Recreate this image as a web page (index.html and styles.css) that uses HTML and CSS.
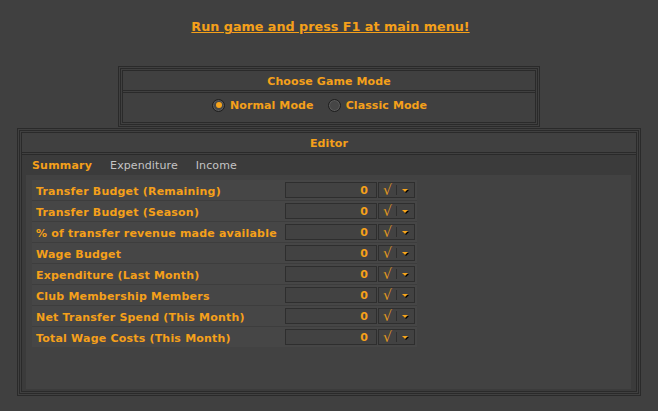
FILE: index.html
```html
<!DOCTYPE html>
<html>
<head>
<meta charset="utf-8">
<link rel="stylesheet" href="styles.css">
</head>
<body>
<div class="page">
  <div class="top"><a class="run" href="#">Run game and press F1 at main menu!</a></div>

  <div class="frame mode">
    <div class="frame-head">Choose Game Mode</div>
    <div class="sep"></div>
    <div class="mode-row">
      <label class="radio"><span class="dot on"></span>Normal Mode</label>
      <label class="radio"><span class="dot"></span>Classic Mode</label>
    </div>
  </div>

  <div class="frame editor">
    <div class="frame-head">Editor</div>
    <div class="sep"></div>
    <div class="editor-body">
      <div class="tabs">
        <span class="tab active">Summary</span>
        <span class="tab">Expenditure</span>
        <span class="tab">Income</span>
      </div>
      <div class="panel">
        <div class="rows">
          <div class="row"><span class="label">Transfer Budget (Remaining)</span><span class="val">0</span><span class="btns"><span class="chk">√</span><span class="div"></span><span class="arr"></span></span></div>
          <div class="row"><span class="label">Transfer Budget (Season)</span><span class="val">0</span><span class="btns"><span class="chk">√</span><span class="div"></span><span class="arr"></span></span></div>
          <div class="row"><span class="label">% of transfer revenue made available</span><span class="val">0</span><span class="btns"><span class="chk">√</span><span class="div"></span><span class="arr"></span></span></div>
          <div class="row"><span class="label">Wage Budget</span><span class="val">0</span><span class="btns"><span class="chk">√</span><span class="div"></span><span class="arr"></span></span></div>
          <div class="row"><span class="label">Expenditure (Last Month)</span><span class="val">0</span><span class="btns"><span class="chk">√</span><span class="div"></span><span class="arr"></span></span></div>
          <div class="row"><span class="label">Club Membership Members</span><span class="val">0</span><span class="btns"><span class="chk">√</span><span class="div"></span><span class="arr"></span></span></div>
          <div class="row"><span class="label">Net Transfer Spend (This Month)</span><span class="val">0</span><span class="btns"><span class="chk">√</span><span class="div"></span><span class="arr"></span></span></div>
          <div class="row"><span class="label">Total Wage Costs (This Month)</span><span class="val">0</span><span class="btns"><span class="chk">√</span><span class="div"></span><span class="arr"></span></span></div>
        </div>
      </div>
    </div>
  </div>
</div>
</body>
</html>
```

FILE: styles.css
```css
html, body {
  margin: 0;
  padding: 0;
  background: #404040;
}
body {
  font-family: "DejaVu Sans", Verdana, sans-serif;
  font-size: 11px;
  color: #f5a01a;
}
.page {
  width: 658px;
  height: 411px;
  overflow: hidden;
}
.top {
  padding-top: 19px;
  height: 14px;
  text-align: center;
  line-height: 15px;
}
.run {
  color: #f5a01a;
  font-weight: bold;
  font-size: 12.75px;
  text-decoration: underline;
  margin-left: 3px;
}
.frame {
  box-sizing: border-box;
  margin: 0 auto;
  border: 1px solid #2a2a2a;
  padding: 4px;
  box-shadow: inset 0 0 0 1px #404040, inset 0 0 0 2px #2a2a2a, inset 0 0 0 3px #404040, inset 0 0 0 4px #2a2a2a;
}
.mode {
  margin-top: 33px;
  width: 422px;
  height: 61px;
}
.editor {
  margin-top: 1px;
  width: 624px;
  height: 268px;
  display: flex;
  flex-direction: column;
}
.frame-head {
  height: 18px;
  padding-top: 1px;
  line-height: 19px;
  text-align: center;
  font-weight: bold;
  letter-spacing: 0.1px;
}
.sep {
  height: 1px;
  border-top: 1px solid #2a2a2a;
  border-bottom: 1px solid #2a2a2a;
}
.mode-row {
  display: flex;
  align-items: center;
  height: 14px;
  padding: 5px 0 0 89px;
  gap: 14px;
  font-weight: bold;
  letter-spacing: 0.1px;
}
.radio {
  display: flex;
  align-items: center;
  gap: 5px;
}
.dot {
  box-sizing: border-box;
  width: 13px;
  height: 13px;
  border-radius: 50%;
  border: 1px solid #1e1e1e;
  background: #464646;
  box-shadow: inset 0 0 0 1px #5a5a5a;
  display: flex;
  align-items: center;
  justify-content: center;
}
.dot.on::after {
  content: "";
  width: 6px;
  height: 6px;
  border-radius: 50%;
  background: #f7a51c;
}
.editor-body {
  flex: 1;
  display: flex;
  flex-direction: column;
  background: #3b3b3b;
  padding: 0 5px 2px 4px;
}
.tabs {
  height: 20px;
  display: flex;
  align-items: center;
  gap: 18px;
  padding-left: 6px;
  color: #c4c4c4;
  letter-spacing: 0.1px;
}
.tab.active {
  color: #f5a01a;
  font-weight: bold;
  letter-spacing: 0.2px;
}
.panel {
  flex: 1;
  background: #424242;
  padding: 5px 0 0 6px;
}
.rows {
  width: 385px;
  display: flex;
  flex-direction: column;
  gap: 1px;
  background: #3d3d3d;
}
.row {
  height: 20px;
  display: flex;
  align-items: center;
  background: #464646;
  font-weight: bold;
}
.label {
  width: 249px;
  padding: 2px 0 0 4px;
  letter-spacing: 0.2px;
}
.val {
  box-sizing: border-box;
  width: 92px;
  height: 16px;
  border: 1px solid #2e2e2e;
  background: #424242;
  text-align: right;
  padding: 1px 8px 0 0;
  line-height: 14px;
}
.btns {
  box-sizing: border-box;
  margin-left: 1px;
  width: 37px;
  height: 16px;
  border: 1px solid #2e2e2e;
  background: #424242;
  display: flex;
  align-items: center;
}
.chk {
  width: 15px;
  text-align: center;
  font-weight: normal;
  font-size: 14px;
  line-height: 14px;
  color: #e39a1e;
  padding-left: 1px;
}
.div {
  width: 1px;
  height: 10px;
  background: #2e2e2e;
  margin-left: 1px;
}
.arr {
  margin-left: 5px;
  width: 0;
  height: 0;
  border-left: 3px solid transparent;
  border-right: 3px solid transparent;
  border-top: 3px solid #f7a51c;
  filter: drop-shadow(1px 1px 0 #000);
}
```
